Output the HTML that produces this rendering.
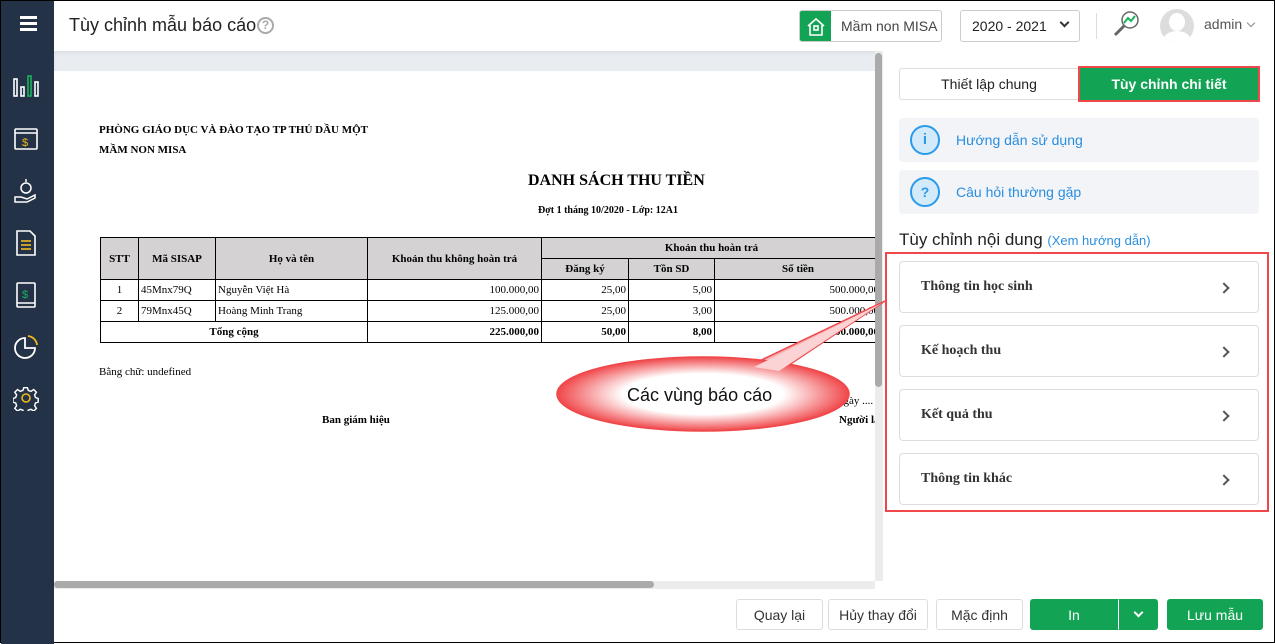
<!DOCTYPE html>
<html><head><meta charset="utf-8"><style>
*{box-sizing:border-box;margin:0;padding:0}
body{width:1275px;height:643px;position:relative;overflow:hidden;background:#fff;font-family:"Liberation Sans",sans-serif;border:1px solid #000}
.a{position:absolute}
.ser{font-family:"Liberation Serif",serif;color:#000;white-space:nowrap}
table{border-collapse:collapse;font-family:"Liberation Serif",serif;font-size:11px;table-layout:fixed}
td{border:1px solid #000;padding:0 2px;height:21px;white-space:nowrap;overflow:hidden}
th{border:1px solid #000;background:#d4d2d3;font-weight:bold;font-size:11px}
.r{text-align:right}
.btn{position:absolute;top:598px;height:31px;border:1px solid #ddd;border-radius:3px;background:#fff;font-size:14px;color:#333;display:flex;align-items:center;justify-content:center}
.g{background:#12a454;border-color:#12a454;color:#fff}
.item{position:absolute;left:898px;width:360px;height:52px;border:1px solid #ddd;border-radius:4px;background:#fff;font-family:"Liberation Serif",serif;font-weight:bold;font-size:14px;color:#333;padding-left:21px;display:flex;align-items:center}
.item::after{content:"";position:absolute;right:30px;top:22px;width:6px;height:6px;border-right:2px solid #555;border-top:2px solid #555;transform:rotate(45deg)}
</style></head><body>
<!-- sidebar -->
<div class="a" style="left:0;top:0;width:53px;height:643px;background:#233246"></div>
<div class="a" style="left:19px;top:15px;width:17px;height:3px;background:#fff;box-shadow:0 6px 0 #fff,0 12px 0 #fff"></div>
<svg class="a" style="left:10px;top:72px" width="30" height="28" viewBox="0 0 30 28" fill="none" stroke="#fff" stroke-width="1.6"><rect x="3" y="6" width="3" height="17"/><rect x="10" y="14" width="3" height="9"/><rect x="17" y="3" width="3" height="20" stroke="#17b45c"/><rect x="24" y="9" width="3" height="14"/></svg>
<svg class="a" style="left:12px;top:124px" width="26" height="26" viewBox="0 0 26 26" fill="none" stroke="#fff" stroke-width="1.6"><rect x="2" y="4" width="22" height="20" rx="1"/><line x1="2" y1="8" x2="24" y2="8"/><text x="9" y="21" font-size="11" fill="#f3b81c" stroke="none" font-family="Liberation Sans">$</text></svg>
<svg class="a" style="left:12px;top:176px" width="26" height="28" viewBox="0 0 26 28" fill="none" stroke="#fff" stroke-width="1.5"><circle cx="13" cy="11" r="5"/><path d="M2 20 h6 l6 2 l8-4 v3 l-8 4 h-12z"/><line x1="13" y1="2" x2="13" y2="5"/></svg>
<svg class="a" style="left:13px;top:228px" width="24" height="28" viewBox="0 0 24 28" fill="none" stroke="#fff" stroke-width="1.6"><path d="M3 2h13l5 5v19H3z"/><g stroke="#f3b81c"><line x1="7" y1="12" x2="17" y2="12"/><line x1="7" y1="16" x2="17" y2="16"/><line x1="7" y1="20" x2="17" y2="20"/></g></svg>
<svg class="a" style="left:13px;top:280px" width="24" height="28" viewBox="0 0 24 28" fill="none" stroke="#fff" stroke-width="1.6"><rect x="3" y="2" width="18" height="24" rx="1"/><line x1="3" y1="22" x2="21" y2="22"/><text x="8" y="17" font-size="11" fill="#17b45c" stroke="none" font-family="Liberation Sans">$</text></svg>
<svg class="a" style="left:12px;top:333px" width="26" height="26" viewBox="0 0 26 26" fill="none" stroke="#fff" stroke-width="1.8"><path d="M12 4 a10 10 0 1 0 10 10 h-10z"/><path d="M15 2 a10 10 0 0 1 9 9" stroke="#f3b81c"/></svg>
<svg class="a" style="left:12px;top:384px" width="26" height="26" viewBox="0 0 26 26" fill="none" stroke="#fff" stroke-width="1.6"><path d="M11 2h4l1 3 3 1 3-2 3 3-2 3 1 3 3 1v4l-3 1-1 3 2 3-3 3-3-2-3 1-1 3h-4l-1-3-3-1-3 2-3-3 2-3-1-3-3-1v-4l3-1 1-3-2-3 3-3 3 2 3-1z" transform="scale(.9) translate(1,1)"/><circle cx="13" cy="13" r="4" stroke="#f3b81c"/></svg>
<!-- header -->
<div class="a" style="left:68px;top:14px;font-size:18px;color:#222;white-space:nowrap">Tùy chỉnh mẫu báo cáo</div>
<div class="a" style="left:256px;top:16px;width:17px;height:17px;border:2px solid #aaa;border-radius:50%;color:#aaa;font-size:12px;font-weight:bold;text-align:center;line-height:13px">?</div>
<div class="a" style="left:798px;top:9px;width:143px;height:32px;border:1px solid #ccc;border-radius:3px;overflow:hidden"><div style="position:absolute;left:0;top:0;width:31px;height:32px;background:#12a454"></div><svg style="position:absolute;left:6px;top:6px" width="20" height="20" viewBox="0 0 20 20" fill="none" stroke="#fff" stroke-width="1.6"><path d="M2 9 L10 2 L18 9 M4 8 v10 h12 v-10"/><rect x="8" y="9" width="4" height="4"/></svg><span style="position:absolute;left:41px;top:7px;font-size:14px;color:#444">Mầm non MISA</span></div>
<div class="a" style="left:959px;top:9px;width:120px;height:32px;border:1px solid #ccc;border-radius:3px;font-size:14px;color:#222;padding:7px 0 0 11px">2020 - 2021</div>
<div class="a" style="left:1060px;top:18px;width:7px;height:7px;border-right:2px solid #333;border-bottom:2px solid #333;transform:rotate(45deg)"></div>
<div class="a" style="left:1095px;top:12px;width:1px;height:26px;background:#ddd"></div>
<svg class="a" style="left:1110px;top:8px" width="30" height="30" viewBox="0 0 30 30" fill="none"><circle cx="19" cy="11" r="8" stroke="#666" stroke-width="1.5"/><path d="M13 14 l4-5 3 3 4-5" stroke="#17b45c" stroke-width="2"/><line x1="13" y1="17" x2="4" y2="26" stroke="#666" stroke-width="3"/></svg>
<div class="a" style="left:1159px;top:8px;width:34px;height:34px;border-radius:50%;background:#ddd;overflow:hidden"><div style="position:absolute;left:9px;top:4px;width:16px;height:18px;border-radius:50%;background:#fff"></div><div style="position:absolute;left:3px;top:22px;width:28px;height:20px;border-radius:50%;background:#fff"></div></div>
<div class="a" style="left:1203px;top:15px;font-size:14px;color:#555">admin</div>
<div class="a" style="left:1247px;top:19px;width:6px;height:6px;border-right:1px solid #888;border-bottom:1px solid #888;transform:rotate(45deg)"></div>
<!-- content -->
<div class="a" style="left:53px;top:50px;width:829px;height:20px;background:#e9ecf1;box-shadow:inset 0 2px 3px rgba(0,0,0,.06)"></div>
<div class="a" style="left:53px;top:70px;width:821px;height:510px;background:#fff;overflow:hidden">
 <div class="a ser" style="left:45px;top:49px;font-size:11px;font-weight:bold;line-height:20px">PHÒNG GIÁO DỤC VÀ ĐÀO TẠO TP THỦ DẦU MỘT<br>MẦM NON MISA</div>
 <div class="a ser" style="left:474px;top:101px;font-size:16px;font-weight:bold">DANH SÁCH THU TIỀN</div>
 <div class="a ser" style="left:484px;top:134px;font-size:10px;font-weight:bold">Đợt 1 tháng 10/2020 - Lớp: 12A1</div>
 <table class="a" style="left:46px;top:166px;width:782px">
  <colgroup><col style="width:38px"><col style="width:77px"><col style="width:152px"><col style="width:174px"><col style="width:87px"><col style="width:86px"><col></colgroup>
  <tr><th rowspan="2" style="height:21px">STT</th><th rowspan="2">Mã SISAP</th><th rowspan="2">Họ và tên</th><th rowspan="2">Khoản thu không hoàn trả</th><th colspan="3" style="height:21px">Khoản thu hoàn trả</th></tr>
  <tr><th style="height:21px">Đăng ký</th><th>Tồn SD</th><th>Số tiền</th></tr>
  <tr><td style="text-align:center">1</td><td>45Mnx79Q</td><td>Nguyễn Việt Hà</td><td class="r">100.000,00</td><td class="r">25,00</td><td class="r">5,00</td><td class="r">500.000,00</td></tr>
  <tr><td style="text-align:center">2</td><td>79Mnx45Q</td><td>Hoàng Minh Trang</td><td class="r">125.000,00</td><td class="r">25,00</td><td class="r">3,00</td><td class="r">500.000,00</td></tr>
  <tr style="font-weight:bold"><td colspan="3" style="text-align:center">Tổng cộng</td><td class="r">225.000,00</td><td class="r">50,00</td><td class="r">8,00</td><td class="r">500.000,00</td></tr>
 </table>
 <div class="a ser" style="left:45px;top:295px;font-size:11px">Bằng chữ: undefined</div>
 <div class="a ser" style="left:268px;top:343px;font-size:11px;font-weight:bold">Ban giám hiệu</div>
 <div class="a ser" style="left:784px;top:324px;font-size:11px">ngày .... tháng</div>
 <div class="a ser" style="left:785px;top:343px;font-size:11px;font-weight:bold">Người lập</div>
</div>
<div class="a" style="left:874px;top:50px;width:8px;height:530px;background:#ececec"></div>
<div class="a" style="left:874px;top:52px;width:7px;height:334px;background:#aaa;border-radius:4px"></div>
<div class="a" style="left:53px;top:580px;width:821px;height:8px;background:#ececec"></div>
<div class="a" style="left:53px;top:580px;width:600px;height:7px;background:#aaa;border-radius:4px"></div>
<!-- callout -->
<svg class="a" style="left:550px;top:296px" width="340" height="140" viewBox="0 0 340 140"><defs><radialGradient id="rg" cx="50%" cy="50%" r="50%"><stop offset="0.55" stop-color="#fff"/><stop offset="1" stop-color="#f0474a"/></radialGradient></defs><path d="M200 68 L334 4 L232 72 Z" fill="#f7b0b2" stroke="#f0474a" stroke-width="1.5"/><ellipse cx="152" cy="97" rx="146" ry="37" fill="url(#rg)" stroke="#f0474a" stroke-width="1.5"/><path d="M203 70 L331 6 L228 74" fill="#fbd3d4"/><text x="76" y="104" font-size="18" font-family="Liberation Sans" fill="#111">Các vùng báo cáo</text></svg>
<!-- right panel -->
<div class="a" style="left:898px;top:67px;width:180px;height:32px;border:1px solid #ddd;border-radius:3px 0 0 3px;font-size:14px;color:#222;text-align:center;line-height:30px">Thiết lập chung</div>
<div class="a" style="left:1077px;top:65px;width:182px;height:36px;border:2px solid #f0474a;background:#12a454;font-size:14px;font-weight:bold;color:#fff;text-align:center;line-height:32px">Tùy chỉnh chi tiết</div>
<div class="a" style="left:898px;top:117px;width:360px;height:44px;background:#f2f4f8;border-radius:4px"></div>
<div class="a" style="left:909px;top:124px;width:30px;height:30px;border:2px solid #2a9be8;border-radius:50%;background:#d3eafa;color:#2a9be8;font-weight:bold;font-size:15px;text-align:center;line-height:26px">i</div>
<div class="a" style="left:955px;top:131px;font-size:14px;color:#2a8ee0">Hướng dẫn sử dụng</div>
<div class="a" style="left:898px;top:169px;width:360px;height:44px;background:#f2f4f8;border-radius:4px"></div>
<div class="a" style="left:909px;top:176px;width:30px;height:30px;border:2px solid #2a9be8;border-radius:50%;background:#d3eafa;color:#2a9be8;font-weight:bold;font-size:14px;text-align:center;line-height:26px">?</div>
<div class="a" style="left:955px;top:183px;font-size:14px;color:#2a8ee0">Câu hỏi thường gặp</div>
<div class="a" style="left:898px;top:229px;font-size:17px;color:#222">Tùy chỉnh nội dung <span style="font-size:13px;color:#2a8ee0">(Xem hướng dẫn)</span></div>
<div class="a" style="left:884px;top:251px;width:384px;height:260px;border:2px solid #f0474a"></div>
<div class="item" style="top:260px">Thông tin học sinh</div>
<div class="item" style="top:324px">Kế hoạch thu</div>
<div class="item" style="top:388px">Kết quả thu</div>
<div class="item" style="top:452px">Thông tin khác</div>
<!-- bottom buttons -->
<div class="btn" style="left:735px;width:87px">Quay lại</div>
<div class="btn" style="left:827px;width:100px">Hủy thay đổi</div>
<div class="btn" style="left:935px;width:87px">Mặc định</div>
<div class="btn g" style="left:1029px;width:88px;border-radius:3px 0 0 3px">In</div>
<div class="btn g" style="left:1117px;width:40px;border-radius:0 3px 3px 0;border-left:1px solid #fff"><div style="width:7px;height:7px;border-right:2px solid #fff;border-bottom:2px solid #fff;transform:rotate(45deg);margin-top:-4px"></div></div>
<div class="btn g" style="left:1166px;width:96px">Lưu mẫu</div>
</body></html>
